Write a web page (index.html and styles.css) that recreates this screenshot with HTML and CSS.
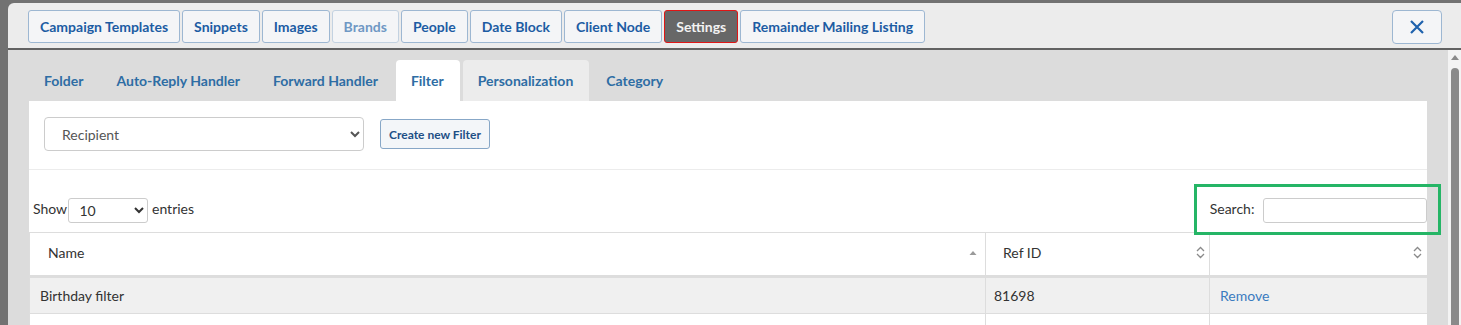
FILE: index.html
```html
<!DOCTYPE html>
<html lang="en">
<head>
  <meta charset="UTF-8" />
  <title>Settings - Filter</title>
  <link rel="stylesheet" href="styles.css">
</head>
<body>
  <div class="modal">
    <!-- Top navigation -->
    <div class="modal-header">
      <nav class="top-tabs">
        <button>Campaign Templates</button>
        <button>Snippets</button>
        <button>Images</button>
        <button class="disabled">Brands</button>
        <button>People</button>
        <button>Date Block</button>
        <button>Client Node</button>
        <button class="current">Settings</button>
        <button>Remainder Mailing Listing</button>
      </nav>
      <button class="close-btn" aria-label="Close">
        <svg width="16" height="16" viewBox="0 0 16 16">
          <path d="M2 2 L14 14 M14 2 L2 14" stroke="#1f62ad" stroke-width="2.2" fill="none" />
        </svg>
      </button>
    </div>

    <div class="modal-body">
      <div class="content">
        <!-- Settings sub tabs -->
        <ul class="sub-tabs">
          <li>Folder</li>
          <li>Auto-Reply Handler</li>
          <li>Forward Handler</li>
          <li class="active">Filter</li>
          <li class="hover">Personalization</li>
          <li>Category</li>
        </ul>

        <div class="panel">
          <div class="filter-bar">
            <select class="type-select">
              <option>Recipient</option>
            </select>
            <button class="create-btn">Create new Filter</button>
          </div>

          <div class="dt-top">
            <label class="dt-length">Show
              <select>
                <option>10</option>
              </select>
              entries
            </label>
            <label class="dt-search">Search:
              <input type="text" />
            </label>
          </div>

          <table class="dt-table">
            <thead>
              <tr>
                <th class="col-name">
                  <div class="th-inner">
                    <span>Name</span>
                    <svg width="8" height="6" viewBox="0 0 8 6"><path d="M0.5 5 L4 1 L7.5 5 Z" fill="#9a9a9a" /></svg>
                  </div>
                </th>
                <th class="col-ref">
                  <div class="th-inner">
                    <span>Ref ID</span>
                    <svg width="9" height="13" viewBox="0 0 9 13"><path d="M1 5 L4.5 1.5 L8 5 M1 8 L4.5 11.5 L8 8" stroke="#8a8a8a" stroke-width="1.3" fill="none" /></svg>
                  </div>
                </th>
                <th class="col-action">
                  <div class="th-inner">
                    <span></span>
                    <svg width="9" height="13" viewBox="0 0 9 13"><path d="M1 5 L4.5 1.5 L8 5 M1 8 L4.5 11.5 L8 8" stroke="#8a8a8a" stroke-width="1.3" fill="none" /></svg>
                  </div>
                </th>
              </tr>
            </thead>
            <tbody>
              <tr class="odd">
                <td>Birthday filter</td>
                <td>81698</td>
                <td><a href="#">Remove</a></td>
              </tr>
              <tr>
                <td>&nbsp;</td>
                <td>&nbsp;</td>
                <td>&nbsp;</td>
              </tr>
            </tbody>
          </table>
        </div>
      </div>

      <!-- Scrollbar -->
      <div class="scrollbar">
        <span class="scroll-arrow"></span>
        <span class="scroll-thumb"></span>
      </div>
    </div>
  </div>
</body>
</html>
```

FILE: styles.css
```css
/* Basic Reset */
* {
  margin: 0;
  padding: 0;
  box-sizing: border-box;
}
body {
  font-family: Lato, "Noto Sans", sans-serif;
  font-size: 14px;
  color: #333;
  background: #727272;
  height: 325px;
  overflow: hidden;
}
/* Modal */
.modal {
  margin: 3px 0 0 8px;
  height: 322px;
  background: #ececec;
  border-top-left-radius: 6px;
  display: flex;
  flex-direction: column;
  overflow: hidden;
}
.modal-header {
  height: 47px;
  padding: 7px 19px 0 20px;
  border-bottom: 2px solid #626262;
  display: flex;
  justify-content: space-between;
  align-items: flex-start;
  flex-shrink: 0;
}
.top-tabs {
  display: flex;
}
.top-tabs button {
  height: 33px;
  padding: 0 11px;
  margin-right: 2px;
  font-family: inherit;
  font-size: 14px;
  font-weight: 700;
  color: #1c5ca3;
  background: #f4f5f7;
  border: 1px solid #9db7d2;
  border-radius: 3px;
  cursor: pointer;
}
.top-tabs button.disabled {
  color: #6f98c4;
  border-color: #c3d2e1;
}
.top-tabs button.current {
  background: #676767;
  color: #f2f2f2;
  border-color: #e01515;
}
.close-btn {
  width: 50px;
  height: 34px;
  background: #f4f5f7;
  border: 1px solid #9db7d2;
  border-radius: 4px;
  display: flex;
  align-items: center;
  justify-content: center;
}
/* Body */
.modal-body {
  flex: 1;
  display: flex;
  background: #dcdcdc;
  min-height: 0;
}
.content {
  flex: 1;
  min-width: 0;
  padding: 10px 21px 0 21px;
  display: flex;
  flex-direction: column;
}
/* Sub tabs */
.sub-tabs {
  list-style: none;
  display: flex;
  height: 41px;
  flex-shrink: 0;
}
.sub-tabs li {
  padding: 0 16px 0 15px;
  margin-right: 2px;
  line-height: 41px;
  font-weight: 700;
  color: #2e6da4;
  border-radius: 4px 4px 0 0;
}
.sub-tabs li.active {
  background: #fff;
}
.sub-tabs li.hover {
  background: #ececec;
  margin-left: 1px;
}
/* Panel */
.panel {
  flex: 1;
  background: #fff;
}
.filter-bar {
  display: flex;
  align-items: center;
  gap: 16px;
  padding: 16px 15px 18px;
  border-bottom: 1px solid #ececec;
}
.type-select {
  width: 320px;
  height: 34px;
  padding: 0 13px;
  font-family: inherit;
  font-size: 14px;
  color: #555;
  background: #fff;
  border: 1px solid #ccc;
  border-radius: 4px;
}
.create-btn {
  height: 30px;
  padding: 0 8px;
  font-family: inherit;
  font-size: 12px;
  font-weight: 700;
  color: #1d4f86;
  background: #f3f6f9;
  border: 1px solid #87a7c7;
  border-radius: 3px;
}
/* DataTable */
.dt-top {
  display: flex;
  justify-content: space-between;
  align-items: center;
  padding: 28px 0 9px 4px;
}
.dt-length select {
  width: 80px;
  height: 25px;
  margin: 0 0 0 -2px;
  padding: 0 6px;
  font-family: inherit;
  font-size: 14px;
  color: #333;
  background: #fff;
  border: 1px solid #ccc;
  border-radius: 3px;
  vertical-align: middle;
}
.dt-search {
  position: relative;
}
.dt-search::after {
  content: "";
  position: absolute;
  top: -14px;
  left: -16px;
  right: -14px;
  bottom: -12px;
  border: 3px solid #25b566;
  pointer-events: none;
}
.dt-search input {
  width: 164px;
  height: 25px;
  margin-left: 5px;
  border: 1px solid #ccc;
  border-radius: 3px;
  vertical-align: middle;
}
.dt-table {
  width: 100%;
  border-collapse: collapse;
  border-left: 1px solid #ddd;
}
.dt-table th {
  height: 44px;
  padding: 0 5px 3px 18px;
  text-align: left;
  font-weight: 400;
  border-top: 1px solid #ddd;
  border-right: 1px solid #ddd;
  border-bottom: 3px solid #ddd;
}
.dt-table th:last-child,
.dt-table td:last-child {
  border-right: none;
}
.dt-table th.col-name {
  width: 956px;
  padding-right: 8px;
}
.dt-table th.col-ref {
  width: 224px;
  padding-left: 17px;
  padding-right: 4px;
}
.th-inner {
  display: flex;
  justify-content: space-between;
  align-items: center;
}
.dt-table td {
  height: 37px;
  padding: 0 10px;
  border-right: 1px solid #ddd;
  border-bottom: 1px solid #ddd;
}
.dt-table td:nth-child(2) {
  padding-left: 8px;
}
.dt-table tr.odd td {
  background: #f0f0f0;
}
.dt-table a {
  color: #3a7bbf;
  text-decoration: none;
}
/* Scrollbar */
.scrollbar {
  width: 13px;
  background: #f3f3f3;
  display: flex;
  flex-direction: column;
  align-items: center;
  padding-top: 5px;
}
.scroll-arrow {
  width: 0;
  height: 0;
  border-left: 4px solid transparent;
  border-right: 4px solid transparent;
  border-bottom: 5px solid #8a8a8a;
}
.scroll-thumb {
  width: 8px;
  flex: 1;
  margin-top: 8px;
  background: #8a8a8a;
  border-radius: 4px 4px 0 0;
}
```
